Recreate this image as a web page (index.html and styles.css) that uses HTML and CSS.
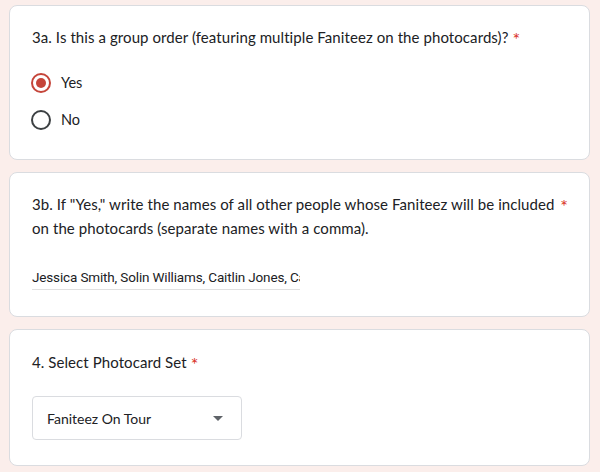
FILE: index.html
```html
<!DOCTYPE html>
<html lang="en">
<head>
<meta charset="utf-8">
<title>Photocard Order Form</title>
<link rel="stylesheet" href="styles.css">
</head>
<body>
<main class="form">
  <section class="card card-radio">
    <div class="q-title">
      <span class="q-text">3a. Is this a group order (featuring multiple Faniteez on the photocards)?</span>
      <span class="req">*</span>
    </div>
    <div class="options">
      <label class="option">
        <span class="radio checked"><span class="dot"></span></span>
        <span class="opt-label">Yes</span>
      </label>
      <label class="option">
        <span class="radio"></span>
        <span class="opt-label">No</span>
      </label>
    </div>
  </section>

  <section class="card card-text">
    <div class="q-title">
      <span class="q-text">3b. If "Yes," write the names of all other people whose Faniteez will be included on the photocards (separate names with a comma).</span>
      <span class="req">*</span>
    </div>
    <div class="text-input">
      <span class="input-value">Jessica Smith, Solin Williams, Caitlin Jones, Carla Brown</span>
    </div>
  </section>

  <section class="card card-select">
    <div class="q-title">
      <span class="q-text">4. Select Photocard Set</span>
      <span class="req">*</span>
    </div>
    <div class="select">
      <span class="select-value">Faniteez On Tour</span>
      <svg class="caret" width="10" height="5" viewBox="0 0 10 5" aria-hidden="true"><path d="M0 0 L10 0 L5 5 Z" fill="#5f6368"/></svg>
    </div>
  </section>
</main>
</body>
</html>
```

FILE: styles.css
```css
* { box-sizing: border-box; }

html, body {
  margin: 0;
  padding: 0;
  background: #fbeeeb;
}

body {
  font-family: "Lato", "Open Sans", sans-serif;
  color: #202124;
}

.form {
  display: flex;
  flex-direction: column;
  gap: 12px;
  width: 581px;
  margin: 5px 0 0 9px;
}

.card {
  background: #ffffff;
  border: 1px solid #dadce0;
  border-radius: 8px;
  padding: 19px 21px 21px 22px;
}

.card-text { padding: 19px 21px 26px 22px; }
.card-select { padding: 20px 21px 25px 22px; }

.q-title {
  display: flex;
  align-items: flex-start;
  font-size: 15px;
  line-height: 24px;
  letter-spacing: 0.08px;
  color: #202124;
}

.q-text { flex: 0 1 auto; }

.req {
  color: #d93025;
  font-size: 18px;
  line-height: 19px;
  padding-top: 5px;
  margin-left: 4px;
  flex: none;
}

.options {
  display: flex;
  flex-direction: column;
  margin-top: 15px;
}

.option {
  display: flex;
  align-items: center;
  height: 37px;
  gap: 10px;
}

.radio {
  width: 20px;
  height: 20px;
  border: 2px solid #3c4043;
  border-radius: 50%;
  display: flex;
  align-items: center;
  justify-content: center;
  margin-left: -1px;
  flex: none;
}

.radio.checked { border-color: #c5453a; }

.dot {
  width: 10px;
  height: 10px;
  border-radius: 50%;
  background: #c5453a;
}

.opt-label {
  font-size: 14.5px;
  color: #202124;
  line-height: 20px;
}

.text-input {
  margin-top: 24px;
  width: 268px;
  height: 26px;
  border-bottom: 1px solid #e0e0e0;
  overflow: hidden;
  display: flex;
  align-items: center;
}

.input-value {
  font-family: "Roboto", "Liberation Sans", sans-serif;
  font-size: 13.5px;
  letter-spacing: -0.15px;
  white-space: nowrap;
  flex: none;
  color: #202124;
}

.select {
  margin-top: 22px;
  width: 210px;
  height: 44px;
  border: 1px solid #dadce0;
  border-radius: 4px;
  display: flex;
  align-items: center;
  justify-content: space-between;
  padding: 0 18px 0 14px;
}

.select-value {
  font-size: 14px;
  color: #202124;
}

.caret { display: block; }
```
